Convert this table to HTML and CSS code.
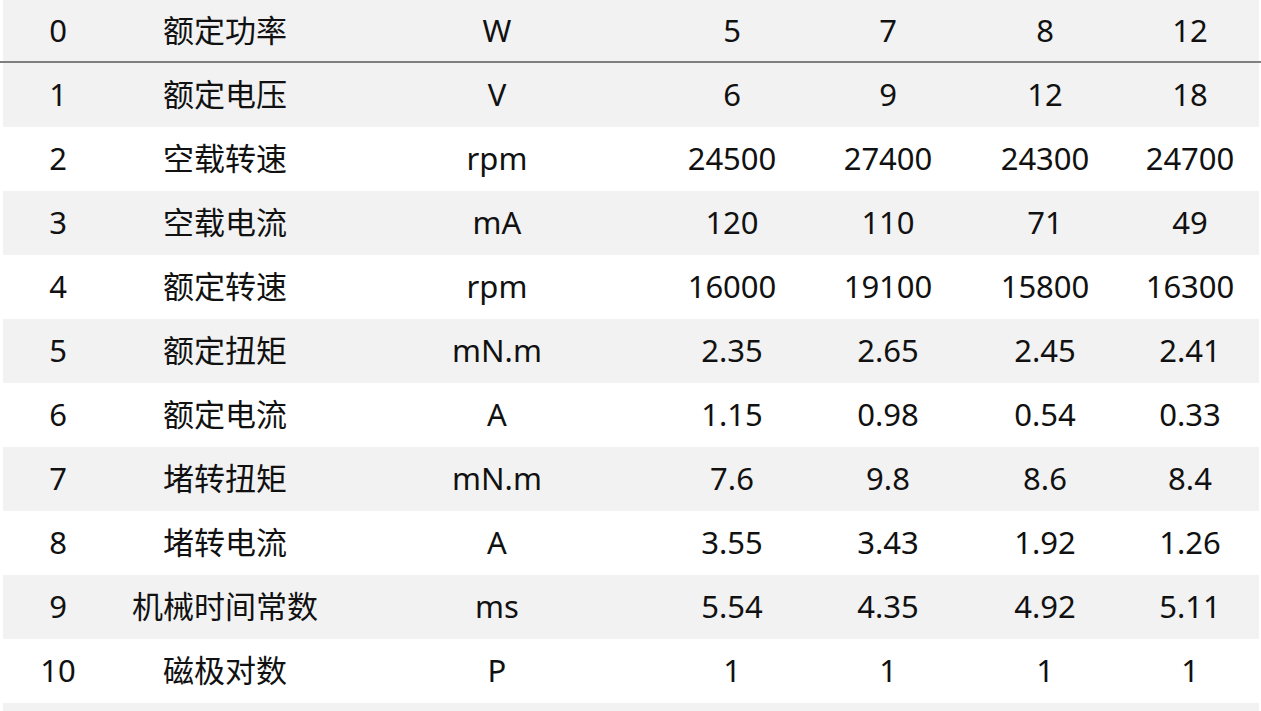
FILE: index.html
```html
<!DOCTYPE html>
<html lang="zh">
<head>
<meta charset="utf-8">
<link rel="stylesheet" href="styles.css">
</head>
<body>
<div class="table">
  <div class="row head"><span>0</span><span>额定功率</span><span>W</span><span>5</span><span>7</span><span>8</span><span>12</span></div>
  <div class="rule"></div>
  <div class="row shade"><span>1</span><span>额定电压</span><span>V</span><span>6</span><span>9</span><span>12</span><span>18</span></div>
  <div class="row"><span>2</span><span>空载转速</span><span>rpm</span><span>24500</span><span>27400</span><span>24300</span><span>24700</span></div>
  <div class="row shade"><span>3</span><span>空载电流</span><span>mA</span><span>120</span><span>110</span><span>71</span><span>49</span></div>
  <div class="row"><span>4</span><span>额定转速</span><span>rpm</span><span>16000</span><span>19100</span><span>15800</span><span>16300</span></div>
  <div class="row shade"><span>5</span><span>额定扭矩</span><span>mN.m</span><span>2.35</span><span>2.65</span><span>2.45</span><span>2.41</span></div>
  <div class="row"><span>6</span><span>额定电流</span><span>A</span><span>1.15</span><span>0.98</span><span>0.54</span><span>0.33</span></div>
  <div class="row shade"><span>7</span><span>堵转扭矩</span><span>mN.m</span><span>7.6</span><span>9.8</span><span>8.6</span><span>8.4</span></div>
  <div class="row"><span>8</span><span>堵转电流</span><span>A</span><span>3.55</span><span>3.43</span><span>1.92</span><span>1.26</span></div>
  <div class="row shade"><span>9</span><span>机械时间常数</span><span>ms</span><span>5.54</span><span>4.35</span><span>4.92</span><span>5.11</span></div>
  <div class="row"><span>10</span><span>磁极对数</span><span>P</span><span>1</span><span>1</span><span>1</span><span>1</span></div>
  <div class="row shade empty"></div>
</div>
</body>
</html>
```

FILE: styles.css
```css
html, body {
  margin: 0;
  padding: 0;
  background: #ffffff;
}
body {
  font-family: "Noto Sans", "Noto Sans CJK SC", sans-serif;
  font-size: 31px;
  color: #111111;
  width: 1261px;
  height: 711px;
  overflow: hidden;
}
.table {
  display: flex;
  flex-direction: column;
}
.row {
  display: grid;
  grid-template-columns: 110px 224px 320px 150px 162px 152px 138px;
  box-sizing: border-box;
  height: 64px;
  padding-bottom: 2px;
  align-items: center;
  margin-left: 3px;
  width: 1256px;
}
.row span {
  text-align: center;
  white-space: nowrap;
  line-height: 1;
}
.head {
  height: 61px;
  padding-bottom: 1px;
  background: #f2f2f2;
}
.rule {
  height: 2px;
  width: 1261px;
  background: #7f7f7f;
}
.shade {
  background: #f2f2f2;
}
.empty {
  height: 20px;
}
```
